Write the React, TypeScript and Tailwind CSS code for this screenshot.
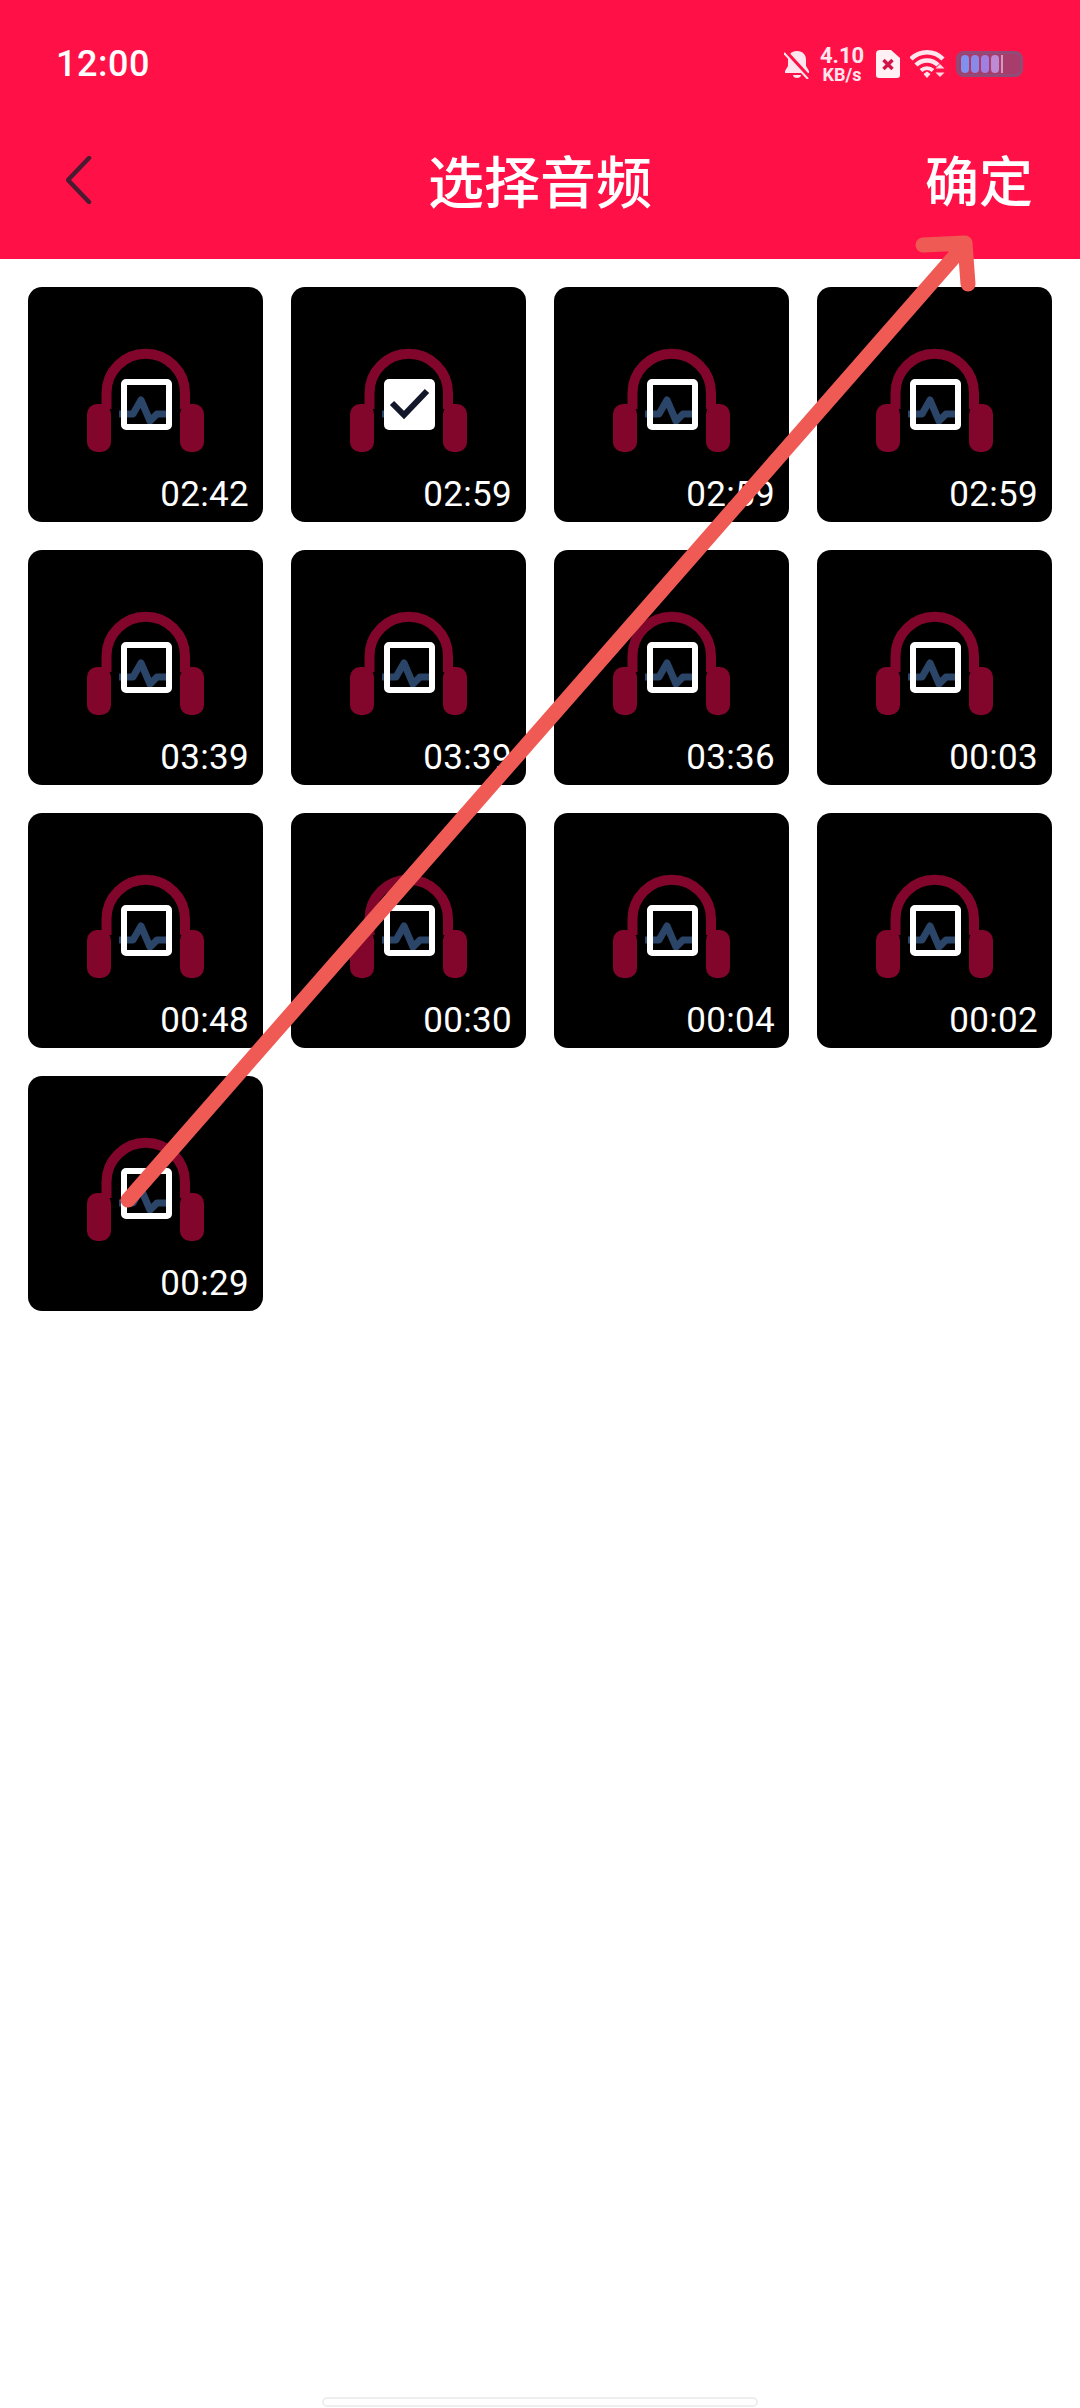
const durations = [
  "02:42", "02:59", "02:59", "02:59",
  "03:39", "03:39", "03:36", "00:03",
  "00:48", "00:30", "00:04", "00:02",
  "00:29",
];

const selectedIndex = 1;

function BellMuted() {
  return (
    <svg width="26" height="29" viewBox="0 0 26 29" className="mr-[11px]">
      <path d="M13 1c6 0 9 4 9 9v6l3 5v2H1v-2l3-5v-6c0-5 3-9 9-9z" fill="#ffe6ee" />
      <path d="M9 25h8c0 2-2 3-4 3s-4-1-4-3z" fill="#ffe6ee" />
      <path d="M1 1l24 26" stroke="#ff1148" strokeWidth="4" />
      <path d="M0 3l24 26" stroke="#ffe6ee" strokeWidth="2" />
    </svg>
  );
}

function SimMissing() {
  return (
    <svg width="24" height="28" viewBox="0 0 24 28">
      <path d="M4 0h11l9 8v17a3 3 0 0 1-3 3H3a3 3 0 0 1-3-3V4a4 4 0 0 1 4-4z" fill="#fff0f4" />
      <path d="M7.500 10l9 9M16.500 10l-9 9" stroke="#d0144a" strokeWidth="3.500" />
    </svg>
  );
}

function WifiSignal() {
  return (
    <svg width="36" height="28" viewBox="0 0 36 28" fill="none">
      <path d="M1 9c9-9 23-9 32 0" stroke="#ffe6ee" strokeWidth="4.500" />
      <path d="M6 15c6-6 16-6 22 0" stroke="#ffe6ee" strokeWidth="4.500" />
      <path d="M11 20.500c3.500-3 8.500-3 12 0" stroke="#ffe6ee" strokeWidth="4" />
      <path d="M13.500 24l3.500-2.500 3.500 2.500-3.500 4z" fill="#ffe6ee" />
      <path d="M30 14l4.500 4.500h-9zM30 27l-4.500-4.500h9z" fill="#ffd5e0" />
    </svg>
  );
}

function Battery() {
  return (
    <div className="flex h-[26px] w-[67px] items-stretch gap-[2px] rounded-[8px] border-[3px] border-[#8f4c78] bg-[#a83d6c] px-[2px] py-[1px]">
      <span className="w-[8px] rounded-[4px] bg-[#7f90ee]" />
      <span className="w-[8px] rounded-[4px] bg-[#8c88e8]" />
      <span className="w-[8px] rounded-[4px] bg-[#9f80e0]" />
      <span className="w-[8px] rounded-[4px] bg-[#bd8ad6]" />
      <span className="w-[2px] bg-[#d09ac2]" />
    </div>
  );
}

function StatusBar() {
  return (
    <div className="flex h-[128px] items-center justify-between pl-[56px] pr-[57px] font-['Roboto',sans-serif] text-white">
      <span className="text-[36px] font-medium leading-none tracking-[0.5px]">12:00</span>
      <div className="flex items-center">
        <BellMuted />
        <div className="mr-[13px] flex w-[42px] flex-col items-center text-[#ffe6ee]">
          <span className="text-[22px] font-bold leading-[20px]">4.10</span>
          <span className="text-[18px] font-bold leading-[17px]">KB/s</span>
        </div>
        <SimMissing />
        <div className="ml-[10px] mr-[10px] flex">
          <WifiSignal />
        </div>
        <Battery />
      </div>
    </div>
  );
}

function NavBar() {
  return (
    <div className="grid h-[101px] grid-cols-[1fr_auto_1fr] items-center font-['Noto_Sans_CJK_SC',sans-serif] text-white">
      <div className="pl-[66px] pt-[3px]">
        <svg width="26" height="48" viewBox="0 0 26 48" fill="none">
          <path d="M23 2L2 24l21 22" stroke="#4a1a30" strokeWidth="4.500" strokeLinecap="round" strokeLinejoin="round" />
        </svg>
      </div>
      <h1 className="text-[56px] font-medium leading-none">选择音频</h1>
      <div className="pr-[47px] text-right text-[54px] font-medium leading-none">确定</div>
    </div>
  );
}

function AudioTile({ duration, selected }: { duration: string; selected: boolean }) {
  return (
    <div className="relative flex h-[235px] w-[235px] items-center justify-center rounded-[14px] bg-black">
      {/* headphones and the wave sit under the checkbox */}
      <svg className="absolute inset-0" width="235" height="235" viewBox="0 0 235 235" fill="none">
        <path d="M78.500 122V106A39 39 0 0 1 157 106V122" stroke="#82062c" strokeWidth="10" />
        <rect x="59" y="117" width="24" height="48" rx="10" fill="#82062c" />
        <rect x="152" y="117" width="24" height="48" rx="10" fill="#82062c" />
        <path d="M91 127h14l8-14 9 21 7-7h15" stroke="#2a4568" strokeWidth="7" strokeLinejoin="round" />
      </svg>
      {selected ? (
        <div className="relative ml-[2px] h-[51px] w-[51px] rounded-[5px] bg-white">
          <svg width="51" height="51" viewBox="0 0 51 51" fill="none">
            <path d="M8 24l12 12 23-24" stroke="#12182a" strokeWidth="6" />
          </svg>
        </div>
      ) : (
        <div className="relative ml-[2px] h-[51px] w-[51px] rounded-[5px] border-[6px] border-white" />
      )}
      <span className="absolute bottom-[7px] right-[14px] font-['Roboto',sans-serif] text-[35px] leading-[40px] tracking-[0.3px] text-white">
        {duration}
      </span>
    </div>
  );
}

export default function App() {
  return (
    <div className="relative flex h-[2408px] w-[1080px] flex-col overflow-hidden bg-white">
      <header className="h-[259px] shrink-0 bg-[#ff1148]">
        <StatusBar />
        <NavBar />
      </header>

      <main className="grid flex-1 grid-cols-[repeat(4,235px)] content-start gap-[28px] p-[28px]">
        {durations.map((duration, i) => (
          <AudioTile key={i} duration={duration} selected={i === selectedIndex} />
        ))}
      </main>

      <div className="mx-auto mb-[1px] h-[10px] w-[436px] rounded-full border-2 border-[#eeeeee] bg-white" />

      {/* hand-drawn annotation arrow across the whole page */}
      <svg className="pointer-events-none absolute inset-0" width="1080" height="2408" viewBox="0 0 1080 2408" fill="none">
        <path
          d="M128 1200L962 248M923 245L965 243L968 284"
          stroke="#f05a55"
          strokeWidth="15"
          strokeLinecap="round"
          strokeLinejoin="round"
        />
      </svg>
    </div>
  );
}
